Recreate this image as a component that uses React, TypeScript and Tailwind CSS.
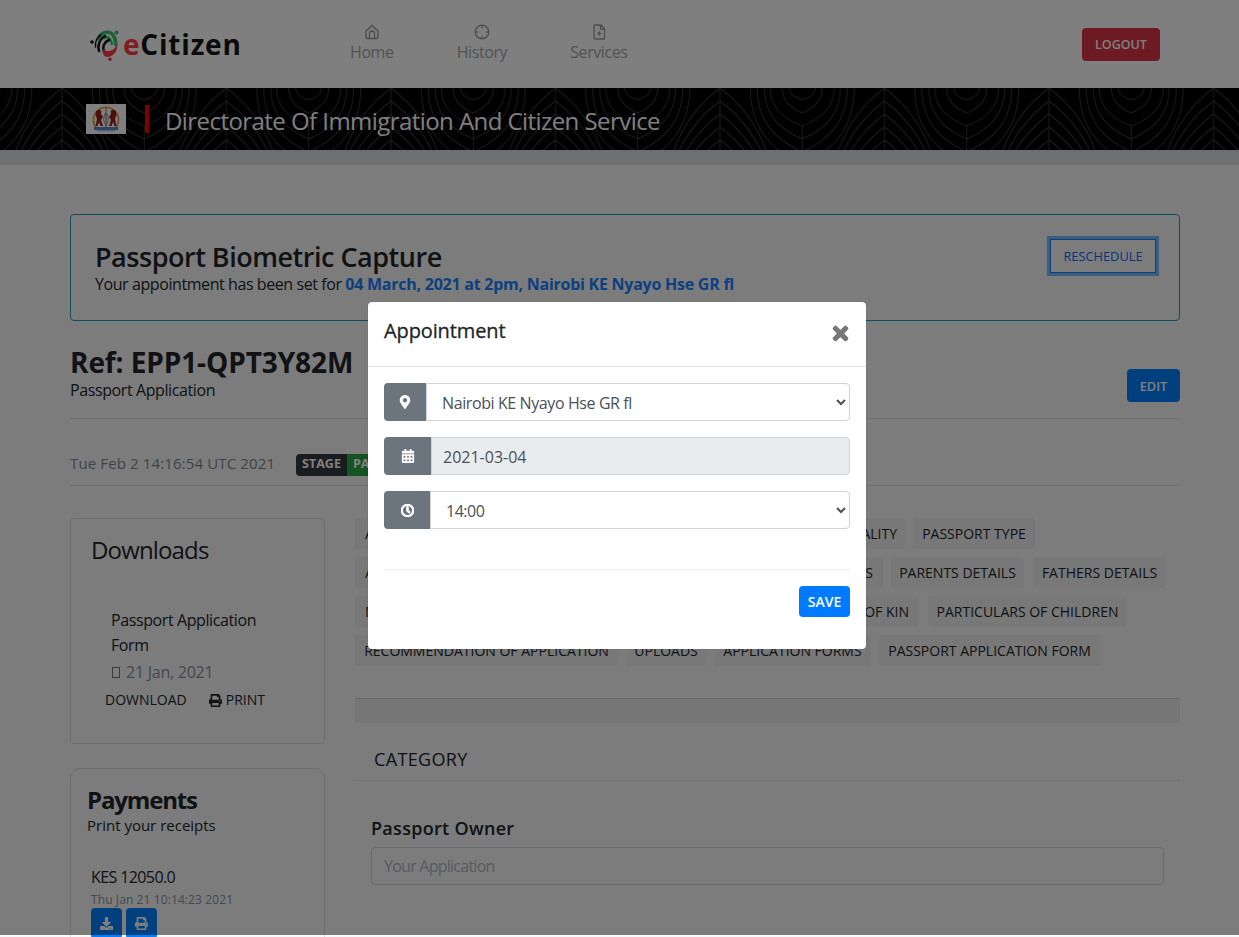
import React from "react";
import { FaMapMarkerAlt, FaCalendarAlt, FaRegClock, FaTimes, FaPrint, FaDownload } from "react-icons/fa";

function Tag({ t, w }: { t: string; w: string }) {
  return (
    <div className={`h-[31px] rounded-[3px] bg-[#f0f0f0] text-[14px] text-[#212529] flex items-center whitespace-nowrap px-[10px] ${w}`}>
      {t}
    </div>
  );
}

function Leaf() {
  const chevrons = [0, 13, 26, 39, 52];
  const us: [number, number][] = [
    [13, 12],
    [20, 25],
    [32, 38],
    [38, 51],
    [45, 64],
    [52, 77],
  ];
  const c = 82.25;
  return (
    <svg className="absolute inset-0 w-full h-full" aria-hidden="true">
      <defs>
        <pattern id="leaf" width="164.5" height="62" patternUnits="userSpaceOnUse" patternTransform="translate(62 0)">
          <g fill="none" stroke="#363636" strokeWidth="1">
            <path d="M0 0V62M164.5 0V62" />
            <path d={`M${c} 38V62`} />
            {chevrons.map((y) => (
              <path
                key={y}
                d={`M0 ${y}Q32 ${y + 24} 46 ${y + 62}M164.5 ${y}Q132.5 ${y + 24} 118.5 ${y + 62}`}
              />
            ))}
            {us.map(([w, h]) => (
              <path
                key={w}
                d={`M${c - w} 0C${c - w} ${h * 0.55} ${c - w * 0.55} ${h * 0.82} ${c} ${h}C${c + w * 0.55} ${h * 0.82} ${c + w} ${h * 0.55} ${c + w} 0`}
              />
            ))}
          </g>
        </pattern>
      </defs>
      <rect width="100%" height="100%" fill="url(#leaf)" />
    </svg>
  );
}

function LogoMark() {
  return (
    <svg width="34" height="34" viewBox="0 0 34 34" className="shrink-0" aria-hidden="true">
      <g fill="none" strokeLinecap="round">
        <path d="M8 12C11 5 19 3 23 8C25 11 26 14 26 18" stroke="#36c46f" strokeWidth="3.500" />
        <path d="M15 11C18 9 21 12 22 17" stroke="#36c46f" strokeWidth="2.500" />
        <path d="M15 9C10 12 7 18 9 24" stroke="#111" strokeWidth="2.500" />
        <path d="M19 13C14 15 12 20 14 25" stroke="#111" strokeWidth="2.500" />
        <path d="M11 8C7 10 5 15 5.500 20" stroke="#111" strokeWidth="1.500" />
      </g>
      <circle cx="26.500" cy="5.500" r="2" fill="#36c46f" />
      <circle cx="2" cy="15" r="1.800" fill="#111" />
      <path d="M13 22C17 26 24 24 27 18C28 24 23 30 17 30C14 30 12 26 13 22Z" fill="#ff3a44" />
      <circle cx="20" cy="32.300" r="1.700" fill="#ff3a44" />
    </svg>
  );
}

function Arms() {
  return (
    <svg width="40" height="30" viewBox="0 0 40 30" className="shrink-0 bg-white" aria-hidden="true">
      <path d="M10.500 24A12.500 12.500 0 1 1 29.500 24" fill="none" stroke="#d9a441" strokeWidth="1.800" />
      <path d="M10 7L13 5.500L15.500 7L15 10L17 13L15 16L17 22H14.500L13 18L11.500 22H9.500L11 15L9.500 11Z" fill="#a01f1f" />
      <path d="M30 7L27 5.500L24.500 7L25 10L23 13L25 16L23 22H25.500L27 18L28.500 22H30.500L29 15L30.500 11Z" fill="#a01f1f" />
      <path d="M18.500 10H21.500L22.500 16L20 22L17.500 16Z" fill="#f4f4f4" stroke="#444" strokeWidth="0.500" />
      <path d="M19.500 4V25M20.500 4V25" stroke="#555" strokeWidth="0.400" />
      <rect x="8" y="23" width="24" height="3" fill="#5f86cf" />
      <rect x="11" y="26" width="18" height="1.500" fill="#b9c4d8" />
    </svg>
  );
}

const navIcon = "w-[16px] h-[16px] fill-none stroke-[#999999] stroke-[1.3]";

export default function App() {
  return (
    <div className="relative w-full h-[937px] overflow-hidden bg-[#f8f9fa] text-[#212529] [font-family:'Open_Sans',sans-serif]">
      <header className="h-[88px] bg-white flex items-center justify-between pl-[90px] pr-[79px]">
        <div className="flex items-center">
          <div className="flex items-center w-[151px]">
            <LogoMark />
            <span className="-ml-[1px] text-[28px] font-bold leading-none tracking-[0.8px] text-[#161616] whitespace-nowrap">
              <span className="text-[#ff3a40]">e</span>Citizen
            </span>
          </div>
          <nav className="ml-[109px] flex gap-[63px] text-[16px] text-[#a6a6a6] tracking-[-0.4px]">
            <a className="flex flex-col items-center leading-[24px]">
              <svg viewBox="0 0 16 16" className={navIcon}>
                <path d="M2 7L8 1.500L14 7V13.500A1 1 0 0 1 13 14.500H3A1 1 0 0 1 2 13.500ZM5.500 14.500V9.500A2.500 2.500 0 0 1 10.500 9.500V14.500" />
              </svg>
              Home
            </a>
            <a className="flex flex-col items-center leading-[24px]">
              <svg viewBox="0 0 16 16" className={navIcon}>
                <circle cx="8" cy="8" r="6.800" />
                <path d="M8 1.200V4M8 12V14.800M1.200 8H4M12 8H14.800" />
              </svg>
              History
            </a>
            <a className="flex flex-col items-center leading-[24px]">
              <svg viewBox="0 0 16 16" className={navIcon}>
                <path d="M3 2A1 1 0 0 1 4 1H10L13.500 4.500V14A1 1 0 0 1 12.500 15H4A1 1 0 0 1 3 14ZM9.500 1V5H13.500M8.300 7.500V11.500M6.300 9.500H10.300" />
              </svg>
              Services
            </a>
          </nav>
        </div>
        <a className="w-[78px] h-[33px] pt-[3px] rounded bg-[#dc3545] text-white text-[12.500px] font-semibold flex items-center justify-center">LOGOUT</a>
      </header>

      <div className="relative h-[62px] bg-black flex items-center pl-[86px]">
        <Leaf />
        <div className="relative flex items-center">
          <Arms />
          <div className="ml-[19px] w-[4px] h-[28px] bg-[#ff0000]" />
          <div className="ml-[16px] mt-[3px] text-[24px] leading-[32px] text-white tracking-[-0.56px] whitespace-nowrap">
            Directorate Of Immigration And Citizen Service
          </div>
        </div>
      </div>
      <div className="h-[15px] bg-[#dcdfe3]" />

      <main className="ml-[70px] w-[1110px]">
        <section className="mt-[49px] h-[107px] rounded border border-[#17a2b8] pl-[24px] pr-[23px] flex justify-between">
          <div className="pt-[24px]">
            <div className="text-[27px] font-semibold leading-[36px] tracking-[-0.48px]">Passport Biometric Capture</div>
            <div className="text-[16px] leading-[19px] tracking-[-0.42px]">
              Your appointment has been set for{" "}
              <b className="text-[#1a80ff] tracking-[-0.25px]">04 March, 2021 at 2pm, Nairobi KE Nyayo Hse GR fl</b>
            </div>
          </div>
          <a className="mt-[24px] w-[106px] h-[34px] pt-[2px] border border-[#1a80ff] text-[#0a6cff] text-[12.800px] font-medium flex items-center justify-center [box-shadow:0_0_0_3px_rgba(0,123,255,0.5)]">
            RESCHEDULE
          </a>
        </section>

        <section className="mt-[24px] h-[74px] border-b border-[#dfdfdf] flex justify-between">
          <div>
            <h1 className="text-[28px] font-bold leading-[34px] tracking-[-0.1px]">Ref: EPP1-QPT3Y82M</h1>
            <div className="text-[16px] leading-[22px] tracking-[-0.4px]">Passport Application</div>
          </div>
          <a className="mt-[24px] w-[53px] h-[33px] pt-[2px] rounded bg-[#0080ff] text-white text-[12.800px] font-semibold flex items-center justify-center">EDIT</a>
        </section>

        <section className="h-[67px] border-b border-[#dfdfdf] flex items-center pt-[25px]">
          <span className="w-[226px] mb-[2px] text-[15px] text-[#7f8790] tracking-[0.13px] whitespace-nowrap">Tue Feb 2 14:16:54 UTC 2021</span>
          <div className="h-[22px] flex text-[12.500px] font-bold text-white rounded overflow-hidden">
            <span className="w-[51px] bg-[#343a40] flex items-center justify-center">STAGE</span>
            <span className="w-[90px] bg-[#28a745] pl-[6px] flex items-center">PASSPORT</span>
          </div>
        </section>

        <div className="mt-[32px] flex gap-[30px]">
          <aside className="w-[255px] shrink-0">
            <section className="h-[226px] rounded border border-[#dcdcdc] pl-[20px] pt-[13px]">
              <h2 className="text-[24px] leading-[36px] tracking-[-0.85px]">Downloads</h2>
              <div className="ml-[20px] mt-[40px] text-[16px] leading-[25px] tracking-[-0.4px]">
                Passport Application
                <br />
                Form
              </div>
              <div className="ml-[21px] mt-[2px] flex items-center text-[16px] leading-[24px] text-[#8a9098] tracking-[-0.25px]">
                <span className="w-[8px] h-[11px] border border-[#6c757d] mr-[6px]" />
                21 Jan, 2021
              </div>
              <div className="ml-[14px] mt-[4px] flex items-center text-[14px] leading-[24px]">
                <span>DOWNLOAD</span>
                <FaPrint size={13} className="ml-[22px] mr-[4px]" />
                <span>PRINT</span>
              </div>
            </section>
            <section className="mt-[24px] h-[300px] rounded-[10px] border border-[#dcdcdc] pl-[16px] pt-[13px]">
              <h2 className="text-[24px] font-bold leading-[36px] tracking-[-1.15px]">Payments</h2>
              <div className="mt-[1px] text-[15px] leading-[12px] whitespace-nowrap">Print your receipts</div>
              <div className="ml-[4px] mt-[34px] text-[16px] leading-[24px] tracking-[-0.6px]">KES 12050.0</div>
              <div className="ml-[4px] text-[12px] leading-[22px] text-[#8a9098] tracking-[0.1px] whitespace-nowrap">Thu Jan 21 10:14:23 2021</div>
              <div className="ml-[4px] -mt-[3px] flex gap-[4px]">
                <a className="w-[31px] h-[31px] rounded bg-[#0080ff] text-white flex items-center justify-center">
                  <FaDownload size={13} />
                </a>
                <a className="w-[31px] h-[31px] rounded bg-[#0080ff] text-white flex items-center justify-center">
                  <FaPrint size={13} />
                </a>
              </div>
            </section>
          </aside>

          <section className="flex-1 min-w-0">
            <div className="flex flex-col gap-[8px]">
              <div className="flex gap-[8px]">
                <Tag t="APPLICATION TYPE" w="w-[220px]" />
                <Tag t="PERSONAL DETAILS" w="w-[210px]" />
                <Tag t="NATIONALITY" w="w-[104px] justify-center" />
                <Tag t="PASSPORT TYPE" w="w-[122px] justify-center" />
              </div>
              <div className="flex gap-[8px]">
                <Tag t="ADDRESS DETAILS" w="w-[150px]" />
                <Tag t="CONTACT DETAILS" w="w-[150px]" />
                <Tag t="EMERGENCY CONTACTS" w="w-[212px] justify-end" />
                <Tag t="PARENTS DETAILS" w="w-[133px] justify-center" />
                <Tag t="FATHERS DETAILS" w="w-[133px] ml-[1px] justify-center" />
              </div>
              <div className="flex gap-[8px]">
                <Tag t="MOTHERS DETAILS" w="w-[140px]" />
                <Tag t="SPOUSE DETAILS" w="w-[130px]" />
                <Tag t="REFEREES" w="w-[170px]" />
                <Tag t="NEXT OF KIN" w="w-[100px] justify-end" />
                <Tag t="PARTICULARS OF CHILDREN" w="w-[199px] ml-[1px] justify-center" />
              </div>
              <div className="flex gap-[8px]">
                <Tag t="RECOMMENDATION OF APPLICATION" w="w-[263px] justify-center" />
                <Tag t="UPLOADS" w="w-[80px] justify-center" />
                <Tag t="APPLICATION FORMS" w="w-[157px] justify-center" />
                <Tag t="PASSPORT APPLICATION FORM" w="w-[221px] justify-center" />
              </div>
            </div>
            <div className="mt-[32px] h-[25px] border-t border-[#cfcfcf] bg-[#ececec]" />
            <div className="mt-[17px] h-[41px] border-b border-[#e6e6e6] pl-[19px] text-[18px] leading-[38px] tracking-[0.35px]">CATEGORY</div>
            <div className="mt-[34px] px-[16px]">
              <label className="block text-[18px] font-semibold leading-[26px] tracking-[0.3px]">Passport Owner</label>
              <input
                readOnly
                placeholder="Your Application"
                className="mt-[6px] w-full h-[38px] rounded border border-[#ced4da] bg-[#f8f9fa] px-[12px] text-[16px] tracking-[-0.75px] placeholder:text-[#b0b5bb]"
              />
            </div>
          </section>
        </div>
      </main>

      <div className="absolute inset-x-0 top-0 h-[935px] bg-black/50" />

      <div className="absolute left-[368px] top-[302px] w-[498px] h-[347px] bg-white rounded shadow-[0_0_1px_rgba(0,0,0,0.4)]">
        <div className="h-[65px] border-b border-[#dee2e6] flex items-center justify-between px-[16px]">
          <span className="text-[20px] font-medium leading-[30px] tracking-[-0.12px] mb-[6px] [-webkit-text-stroke:0.3px_#212529]">Appointment</span>
          <FaTimes size={21} stroke="#777777" strokeWidth={30} className="text-[#777777] mb-[1px] -mr-[1px]" />
        </div>
        <div className="px-[16px] pt-[16px] flex flex-col gap-[16px]">
          <div className="flex h-[38px]">
            <div className="w-[42px] rounded-l bg-[#6c757d] flex items-center justify-center text-white">
              <FaMapMarkerAlt size={14} />
            </div>
            <select defaultValue="a" className="flex-1 min-w-0 rounded-r border border-[#ced4da] bg-white pl-[11px] pt-[2px] text-[16px] text-[#495057] tracking-[-0.4px]">
              <option value="a">Nairobi KE Nyayo Hse GR fl</option>
            </select>
          </div>
          <div className="flex h-[38px]">
            <div className="w-[47px] rounded-l bg-[#6c757d] flex items-center justify-center text-white">
              <FaCalendarAlt size={14} />
            </div>
            <input readOnly value="2021-03-04" className="flex-1 min-w-0 rounded-r border border-[#ced4da] bg-[#e9ecef] pl-[11px] pr-[12px] pt-[2px] text-[16px] text-[#495057]" />
          </div>
          <div className="flex h-[38px]">
            <div className="w-[46px] rounded-l bg-[#6c757d] flex items-center justify-center text-white">
              <FaRegClock size={13} stroke="white" strokeWidth={40} />
            </div>
            <select defaultValue="a" className="flex-1 min-w-0 rounded-r border border-[#ced4da] bg-white pl-[11px] pt-[2px] text-[16px] text-[#495057] tracking-[-0.5px]">
              <option value="a">14:00</option>
            </select>
          </div>
        </div>
        <div className="mx-[16px] mt-[40px] border-t border-[#eeeeee]" />
        <div className="mx-[16px] mt-[16px] flex justify-end">
          <a className="w-[51px] h-[31px] rounded bg-[#007bff] text-white text-[14px] font-semibold flex items-center justify-center">SAVE</a>
        </div>
      </div>
    </div>
  );
}
